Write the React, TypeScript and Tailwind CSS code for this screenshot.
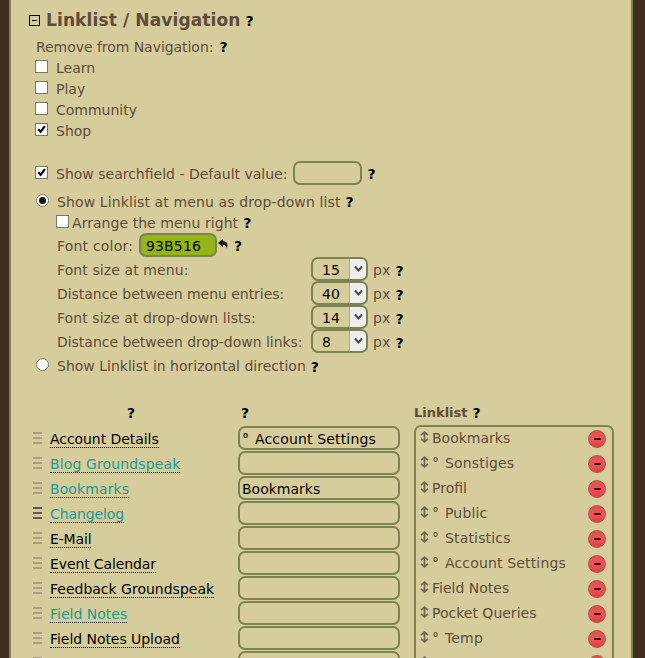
import React from "react";

const Help = ({ className = "" }: { className?: string }) => (
  <b className={`shrink-0 pt-px text-[14px] leading-none tracking-normal text-black ${className}`}>?</b>
);

const Check = ({ on = false }: { on?: boolean }) => (
  <span className="block h-[13px] w-[13px] shrink-0 border border-[#77776e] bg-white">
    {on && (
      <svg viewBox="0 0 11 11" className="block h-[11px] w-[11px]">
        <path d="M2.2 5.2 L4.6 7.8 L8.9 2.2" fill="none" stroke="#000" strokeWidth="2.2" />
      </svg>
    )}
  </span>
);

const Radio = ({ on = false }: { on?: boolean }) => (
  <span className="flex h-[13px] w-[13px] shrink-0 items-center justify-center rounded-full border border-[#77776e] bg-white">
    {on && <span className="block h-[7px] w-[7px] rounded-full bg-[#151515]" />}
  </span>
);

const Grip = ({ dark = false }: { dark?: boolean }) => (
  <span className="mb-[2px] flex w-[9px] shrink-0 flex-col gap-[3px]">
    {[0, 1, 2].map((i) => (
      <span key={i} className={`block h-[2px] ${dark ? "bg-[#625a4a]" : "bg-[#aca080]"}`} />
    ))}
  </span>
);

const Arrow = () => (
  <svg viewBox="0 0 9 12" className="mb-px h-[12px] w-[9px] shrink-0">
    <path
      d="M4.5 1.5v9M1 4.2L4.5 1.2L8 4.2M1 7.8L4.5 10.8L8 7.8"
      fill="none"
      stroke="#6b6750"
      strokeWidth="1.7"
    />
  </svg>
);

const Remove = () => (
  <span className="flex h-[18px] w-[18px] shrink-0 items-center justify-center rounded-full border border-[#a8584c] bg-linear-to-b from-[#e0504a] via-[#f4525a] to-[#e03c40]">
    <span className="block h-[2px] w-[7px] bg-[#3a0d0c]" />
  </span>
);

const sizes = [
  { label: "Font size at menu:", value: "15", fit: "tracking-[0.1px]" },
  { label: "Distance between menu entries:", value: "40", fit: "tracking-[-0.04px]" },
  { label: "Font size at drop-down lists:", value: "14", fit: "tracking-[0.07px]" },
  { label: "Distance between drop-down links:", value: "8", fit: "tracking-[-0.03px]" },
];

const links = [
  { name: "Account Details", custom: "° Account Settings", fit: "tracking-[-0.06px]" },
  { name: "Blog Groundspeak", teal: true, fit: "tracking-[0.13px]" },
  { name: "Bookmarks", teal: true, custom: "Bookmarks", fit: "tracking-[0.1px]" },
  { name: "Changelog", teal: true, dark: true, fit: "tracking-[-0.1px]" },
  { name: "E-Mail", fit: "tracking-[-0.15px]" },
  { name: "Event Calendar", fit: "tracking-[-0.12px]" },
  { name: "Feedback Groundspeak", fit: "" },
  { name: "Field Notes", teal: true, fit: "" },
  { name: "Field Notes Upload", fit: "tracking-[-0.05px]" },
  { name: "", fit: "" },
];

const list = [
  "Bookmarks",
  "° Sonstiges",
  "Profil",
  "° Public",
  "° Statistics",
  "° Account Settings",
  "Field Notes",
  "Pocket Queries",
  "° Temp",
  "",
];

// The degree prefix marks a sub-entry and takes a wider cell than its glyph.
const Entry = ({ text }: { text: string }) =>
  text.startsWith("° ") ? (
    <span className="flex">
      <span className="w-[13px]">°</span>
      <span className="tracking-[0.16px]">{text.slice(2)}</span>
    </span>
  ) : (
    <span>{text}</span>
  );

export default function App() {
  return (
    <div className="h-[658px] w-[645px] overflow-hidden bg-[#402e20] pr-[12px] pl-[9px] font-['Verdana','DejaVu_Sans',sans-serif] text-[14px] leading-[20px] whitespace-nowrap text-[#5d4c37]">
      <div className="h-[658px] overflow-hidden border-x-2 border-[#7b8451] bg-[#d7cd9c] pl-[18px]">
        <div className="mt-2 flex h-6 items-center">
          <span className="mt-px flex h-[11px] w-[11px] items-center justify-center border border-black">
            <span className="block h-px w-[5px] bg-black" />
          </span>
          <b className="ml-[6px] text-[17px] tracking-[0.12px]">Linklist / Navigation</b>
          <Help className="mt-px ml-[5px]" />
        </div>
        <div className="mt-[4px] flex h-[21px] items-center pl-[7px]">
          <span className="tracking-[-0.05px]">Remove from Navigation:</span>
          <Help className="ml-[6px]" />
        </div>
        {["Learn", "Play", "Community", "Shop"].map((t) => (
          <div key={t} className="flex h-[21px] items-center gap-2 pl-[6px]">
            <span className="mb-[3px]">
              <Check on={t === "Shop"} />
            </span>
            {t}
          </div>
        ))}
        <div className="mt-[20px] flex h-[25px] items-center pl-[6px]">
          <span className="mb-[2px]">
            <Check on />
          </span>
          <span className="ml-2">Show searchfield - Default value:</span>
          <span className="mb-px ml-[6px] block h-[24px] w-[69px] rounded-[7px] border-2 border-[#7b8451]" />
          <Help className="ml-[5px]" />
        </div>
        <div className="mt-[5px] flex h-[21px] items-center pl-[7px]">
          <span className="mb-[2px]">
            <Radio on />
          </span>
          <span className="ml-2 tracking-[0.12px]">Show Linklist at menu as drop-down list</span>
          <Help className="ml-[5px]" />
        </div>
        <div className="flex h-[21px] items-center pl-[27px]">
          <span className="mb-[2px]">
            <Check />
          </span>
          <span className="ml-[3px] tracking-[0.05px]">Arrange the menu right</span>
          <Help className="ml-[5px]" />
        </div>
        <div className="flex h-[25px] items-center pl-[28px]">
          <span className="w-[82px] tracking-[0.2px]">Font color:</span>
          <span className="mb-px flex h-[24px] w-[78px] items-center rounded-[7px] border-2 border-[#7b8451] bg-[#93b516] pt-px pl-[5px] tracking-[0.15px] text-black">
            93B516
          </span>
          <svg viewBox="0 0 11 10" className="mb-[3px] ml-px h-[10px] w-[11px]">
            <path d="M0 4L5 0V2.3C9 2.3 10.5 5 8.8 9.8C8.6 7 7.5 5.8 5 5.8V8Z" fill="#111" />
          </svg>
          <Help className="ml-[5px]" />
        </div>
        {sizes.map((s) => (
          <div key={s.label} className="flex h-[24px] items-center pl-[28px]">
            <span className={`w-[254px] ${s.fit}`}>{s.label}</span>
            <span className="mb-[2px] flex h-[24px] w-[57px] shrink-0 items-center overflow-hidden rounded-[7px] border-2 border-[#7b8451] text-black">
              <span className="w-[36px] pt-[2px] pl-[9px]">{s.value}</span>
              <span className="flex h-full flex-1 items-center justify-center border-l border-[#aaa58c] bg-[#eeeeee]">
                <svg viewBox="0 0 9 8" className="h-[8px] w-[9px]">
                  <path d="M1 1.5L4.5 5.5L8 1.5" fill="none" stroke="#4b4b4b" strokeWidth="2" />
                </svg>
              </span>
            </span>
            <span className="ml-[5px] tracking-[0.2px]">px</span>
            <Help className="ml-[5px]" />
          </div>
        ))}
        <div className="flex h-[24px] items-center pl-[7px]">
          <span className="mb-[3px]">
            <Radio />
          </span>
          <span className="ml-2">Show Linklist in horizontal direction</span>
          <Help className="ml-[5px]" />
        </div>
        <div className="mt-[22px] grid h-[25px] grid-cols-[209px_176px_200px] items-center">
          <Help className="pl-[98px]" />
          <Help className="pl-[3px]" />
          <div className="flex items-center">
            <b className="text-[13px]">Linklist</b>
            <Help className="ml-[5px]" />
          </div>
        </div>
        <div className="grid grid-cols-[209px_176px_200px]">
          <div className="pt-px">
            {links.map((l) => (
              <div key={l.name} className="flex h-[25px] items-center pl-[4px]">
                <Grip dark={l.dark} />
                {l.name && (
                  <span
                    className={`mt-[2px] ml-2 border-b border-dotted border-black leading-[16px] ${l.fit} ${l.teal ? "text-[#209a91]" : "text-black"}`}
                  >
                    {l.name}
                  </span>
                )}
              </div>
            ))}
          </div>
          <div className="flex flex-col gap-px pt-px">
            {links.map((l) => (
              <div
                key={l.name}
                className="flex h-[24px] w-[162px] items-center rounded-[7px] border-2 border-[#7b8451] pt-px pl-[2px] text-black"
              >
                {l.custom && <Entry text={l.custom} />}
              </div>
            ))}
          </div>
          <div className="rounded-t-[7px] border-2 border-b-0 border-[#7b8451]">
            {list.map((t, i) => (
              <div
                key={t}
                className={`flex h-[25px] items-center pr-[6px] pl-[4px] ${i === 0 ? "-mt-[2px]" : ""}`}
              >
                <Arrow />
                <span className="ml-[3px] flex-1">
                  <Entry text={t} />
                </span>
                <span className="mt-[2px]">
                  <Remove />
                </span>
              </div>
            ))}
          </div>
        </div>
      </div>
    </div>
  );
}
